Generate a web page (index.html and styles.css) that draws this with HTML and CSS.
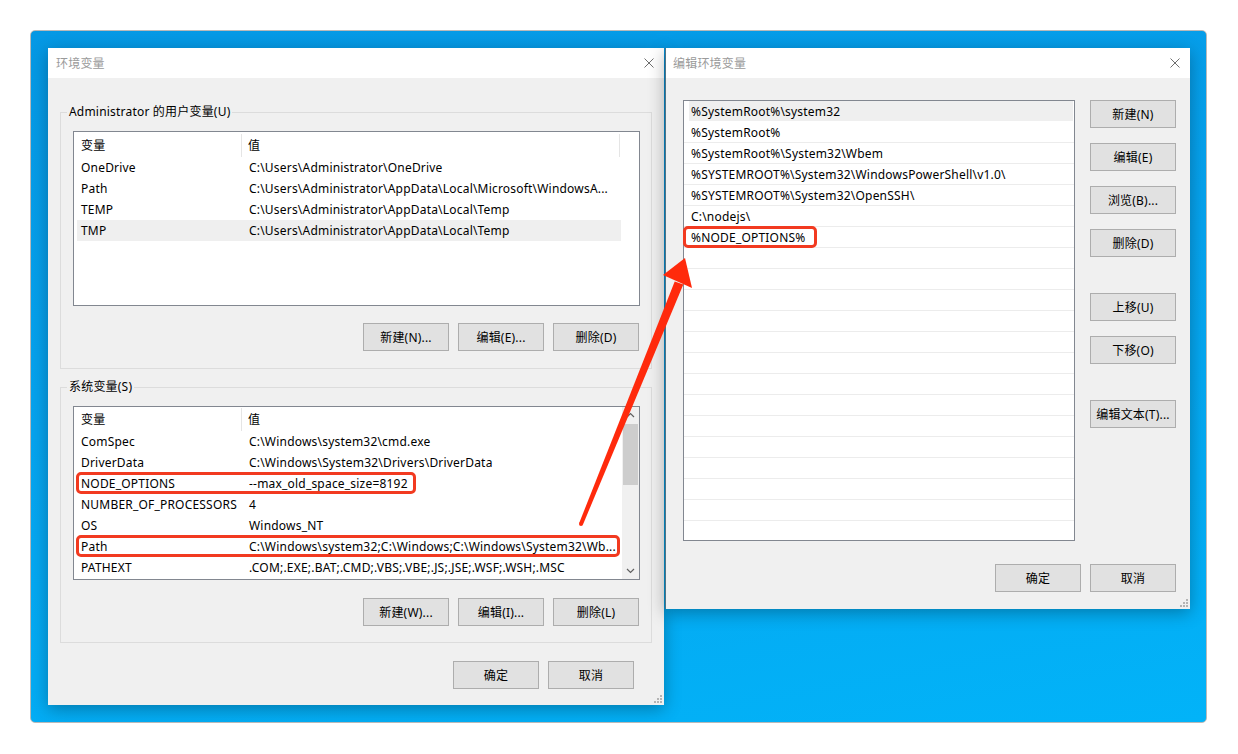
FILE: index.html
```html
<!DOCTYPE html>
<html lang="zh-CN">
<head>
    <meta charset="UTF-8">
    <title>环境变量</title>
    <link rel="stylesheet" href="styles.css">
</head>
<body>
    <div class="desktop">
        <!-- 环境变量 -->
        <div class="window env-window">
            <div class="titlebar">
                <span class="title">环境变量</span>
                <svg class="close" width="10" height="10" viewBox="0 0 10 10"><path d="M0.5 0.5L9.5 9.5M9.5 0.5L0.5 9.5" stroke="#6f6f6f" stroke-width="1"/></svg>
            </div>
            <div class="window-body env-body">
                <fieldset class="group">
                    <legend>Administrator 的用户变量(U)</legend>
                    <div class="listview user-list">
                        <div class="lv-main">
                            <div class="lv-head">
                                <div class="h1">变量</div>
                                <div class="h2">值</div>
                            </div>
                            <div class="lv-row"><div class="c1">OneDrive</div><div class="c2">C:\Users\Administrator\OneDrive</div></div>
                            <div class="lv-row"><div class="c1">Path</div><div class="c2">C:\Users\Administrator\AppData\Local\Microsoft\WindowsA...</div></div>
                            <div class="lv-row"><div class="c1">TEMP</div><div class="c2">C:\Users\Administrator\AppData\Local\Temp</div></div>
                            <div class="lv-row selected"><div class="c1">TMP</div><div class="c2">C:\Users\Administrator\AppData\Local\Temp</div></div>
                        </div>
                    </div>
                    <div class="btn-row">
                        <button>新建(N)...</button>
                        <button>编辑(E)...</button>
                        <button>删除(D)</button>
                    </div>
                </fieldset>

                <fieldset class="group sys-group">
                    <legend>系统变量(S)</legend>
                    <div class="listview sys-list">
                        <div class="lv-main">
                            <div class="lv-head">
                                <div class="h1">变量</div>
                                <div class="h2">值</div>
                            </div>
                            <div class="lv-row"><div class="c1">ComSpec</div><div class="c2">C:\Windows\system32\cmd.exe</div></div>
                            <div class="lv-row"><div class="c1">DriverData</div><div class="c2">C:\Windows\System32\Drivers\DriverData</div></div>
                            <div class="lv-row"><div class="c1">NODE_OPTIONS</div><div class="c2">--max_old_space_size=8192</div><span class="mark mark-node"></span></div>
                            <div class="lv-row"><div class="c1">NUMBER_OF_PROCESSORS</div><div class="c2">4</div></div>
                            <div class="lv-row"><div class="c1">OS</div><div class="c2">Windows_NT</div></div>
                            <div class="lv-row"><div class="c1">Path</div><div class="c2">C:\Windows\system32;C:\Windows;C:\Windows\System32\Wb...</div><span class="mark mark-path"></span></div>
                            <div class="lv-row"><div class="c1">PATHEXT</div><div class="c2">.COM;.EXE;.BAT;.CMD;.VBS;.VBE;.JS;.JSE;.WSF;.WSH;.MSC</div></div>
                        </div>
                        <div class="scrollbar">
                            <svg class="arrow-btn" width="17" height="17" viewBox="0 0 17 17"><path d="M5 10L8.5 6.5L12 10" fill="none" stroke="#606060" stroke-width="1.2"/></svg>
                            <div class="thumb"></div>
                            <div class="track"></div>
                            <svg class="arrow-btn" width="17" height="17" viewBox="0 0 17 17"><path d="M5 7L8.5 10.5L12 7" fill="none" stroke="#606060" stroke-width="1.2"/></svg>
                        </div>
                    </div>
                    <div class="btn-row">
                        <button>新建(W)...</button>
                        <button>编辑(I)...</button>
                        <button>删除(L)</button>
                    </div>
                </fieldset>

                <div class="btn-row dialog-btns">
                    <button>确定</button>
                    <button>取消</button>
                </div>
            </div>
            <svg class="grip" width="9" height="9" viewBox="0 0 9 9" fill="#b4b4b4"><rect x="7" y="1" width="2" height="2"/><rect x="4" y="4" width="2" height="2"/><rect x="7" y="4" width="2" height="2"/><rect x="1" y="7" width="2" height="2"/><rect x="4" y="7" width="2" height="2"/><rect x="7" y="7" width="2" height="2"/></svg>
        </div>

        <!-- 编辑环境变量 -->
        <div class="window edit-window">
            <div class="titlebar">
                <span class="title">编辑环境变量</span>
                <svg class="close" width="10" height="10" viewBox="0 0 10 10"><path d="M0.5 0.5L9.5 9.5M9.5 0.5L0.5 9.5" stroke="#6f6f6f" stroke-width="1"/></svg>
            </div>
            <div class="window-body edit-body">
                <div class="edit-main">
                    <div class="path-list">
                        <div class="path-row selected">%SystemRoot%\system32</div>
                        <div class="path-row">%SystemRoot%</div>
                        <div class="path-row">%SystemRoot%\System32\Wbem</div>
                        <div class="path-row">%SYSTEMROOT%\System32\WindowsPowerShell\v1.0\</div>
                        <div class="path-row">%SYSTEMROOT%\System32\OpenSSH\</div>
                        <div class="path-row">C:\nodejs\</div>
                        <div class="path-row">%NODE_OPTIONS%<span class="mark mark-env"></span></div>
                        <div class="path-row"></div>
                        <div class="path-row"></div>
                        <div class="path-row"></div>
                        <div class="path-row"></div>
                        <div class="path-row"></div>
                        <div class="path-row"></div>
                        <div class="path-row"></div>
                        <div class="path-row"></div>
                        <div class="path-row"></div>
                        <div class="path-row"></div>
                        <div class="path-row"></div>
                        <div class="path-row"></div>
                        <div class="path-row"></div>
                    </div>
                    <div class="side-btns">
                        <button>新建(N)</button>
                        <button class="gap-s">编辑(E)</button>
                        <button class="gap-s">浏览(B)...</button>
                        <button class="gap-s">删除(D)</button>
                        <button class="gap-l">上移(U)</button>
                        <button class="gap-s">下移(O)</button>
                        <button class="gap-l">编辑文本(T)...</button>
                    </div>
                </div>
                <div class="btn-row edit-btns">
                    <button>确定</button>
                    <button>取消</button>
                </div>
            </div>
            <svg class="grip" width="9" height="9" viewBox="0 0 9 9" fill="#b4b4b4"><rect x="7" y="1" width="2" height="2"/><rect x="4" y="4" width="2" height="2"/><rect x="7" y="4" width="2" height="2"/><rect x="1" y="7" width="2" height="2"/><rect x="4" y="7" width="2" height="2"/><rect x="7" y="7" width="2" height="2"/></svg>
        </div>
    </div>

    <!-- annotation arrow -->
    <svg class="annotation" width="1238" height="754" viewBox="0 0 1238 754">
        <polygon points="579.1,523.3 582.9,524.7 683.3,284.6 674.7,281.4" fill="#ff2a0c"/>
        <circle cx="581" cy="524" r="2" fill="#ff2a0c"/>
        <polygon points="685,258 663,275 692,288" fill="#ff2a0c"/>
    </svg>
</body>
</html>
```

FILE: styles.css
```css
:root {
    --ui-font: "Noto Sans", "Noto Sans CJK SC", sans-serif;
    --face: #f0f0f0;
    --btn-face: #e1e1e1;
    --btn-border: #adadad;
    --list-border: #828790;
    --mark: #f23a20;
}

body {
    margin: 0;
    background: #fff;
    font-family: var(--ui-font);
    font-size: 12px;
    letter-spacing: 0.2px;
    color: #000;
}

.desktop {
    position: relative;
    box-sizing: border-box;
    width: 1177px;
    height: 693px;
    margin: 30px 0 0 30px;
    border: 1px solid #b9b9b9;
    border-radius: 5px;
    background: linear-gradient(170deg, #0598e4 0%, #06a3ee 45%, #02b3f8 100%);
    overflow: hidden;
}

/* windows */
.window {
    position: absolute;
    top: 17px;
    box-sizing: border-box;
    display: flex;
    flex-direction: column;
    background: var(--face);
    box-shadow: 0 4px 16px rgba(0, 0, 0, 0.3);
}

.env-window {
    left: 17px;
    width: 616px;
    height: 657px;
    z-index: 1;
}

.edit-window {
    left: 634px;
    width: 525px;
    height: 561px;
    border-left: 1px solid #4f7286;
    z-index: 2;
}

.titlebar {
    height: 30px;
    flex: none;
    display: flex;
    align-items: center;
    justify-content: space-between;
    padding: 0 10px 0 8px;
    background: #fff;
}

.edit-window .titlebar {
    padding-left: 7px;
    padding-right: 10px;
}

.title {
    color: #9a9a9a;
    font-size: 12px;
}

.close {
    display: block;
}

.window-body {
    flex: 1;
    display: flex;
    flex-direction: column;
}

.grip {
    position: absolute;
    right: 2px;
    bottom: 2px;
}

/* buttons */
button {
    box-sizing: border-box;
    width: 86px;
    height: 28px;
    padding: 0;
    background: var(--btn-face);
    border: 1px solid var(--btn-border);
    border-radius: 0;
    font-family: var(--ui-font);
    font-size: 12px;
    letter-spacing: 0.2px;
    color: #000;
}

.btn-row {
    display: flex;
    justify-content: flex-end;
    gap: 9px;
}

/* 环境变量 dialog */
.env-body {
    padding: 26px 12px 0 12px;
}

.group {
    margin: 0;
    padding: 11px 11px 17px 12px;
    border: 1px solid #dcdcdc;
    min-width: 0;
}

.group legend {
    padding: 0 2px;
    margin-left: -6px;
    line-height: 16px;
}

.sys-group {
    margin-top: 10px;
    padding-bottom: 16px;
}

.group .btn-row {
    margin-top: 17px;
    padding-right: 1px;
}

.sys-group .btn-row {
    margin-top: 18px;
}

.dialog-btns {
    margin-top: 18px;
    padding-right: 18px;
}

.listview {
    box-sizing: border-box;
    display: flex;
    background: #fff;
    border: 1px solid var(--list-border);
}

.user-list {
    height: 175px;
}

.sys-list {
    height: 174px;
}

.lv-main {
    flex: 1;
    min-width: 0;
}

.lv-head {
    display: flex;
    height: 24px;
    align-items: center;
}

.user-list .lv-head {
    height: 25px;
}

.lv-head .h1 {
    box-sizing: border-box;
    width: 168px;
    padding-left: 7px;
    border-right: 1px solid #e5e5e5;
    line-height: 23px;
    margin-top: 1px;
}

.lv-head .h2 {
    box-sizing: border-box;
    width: 378px;
    padding-left: 6px;
    border-right: 1px solid #e5e5e5;
    line-height: 23px;
    margin-top: 1px;
}

.sys-list .lv-head .h2 {
    border-right: none;
}

.lv-row {
    position: relative;
    display: flex;
    width: 544px;
    height: 21px;
    line-height: 21px;
    margin-left: 3px;
    white-space: nowrap;
}

.lv-row.selected {
    background: #efefef;
}

.lv-row .c1 {
    width: 165px;
    padding-left: 4px;
    box-sizing: border-box;
    overflow: hidden;
}

.lv-row .c2 {
    flex: 1;
    padding-left: 7px;
    overflow: hidden;
}

.scrollbar {
    width: 17px;
    flex: none;
    display: flex;
    flex-direction: column;
    background: #f0f0f0;
}

.arrow-btn {
    display: block;
    flex: none;
}

.thumb {
    height: 61px;
    margin: 0 1px;
    background: #cdcdcd;
}

.track {
    flex: 1;
}

/* red annotation boxes */
.mark {
    position: absolute;
    box-sizing: border-box;
    border: 3px solid var(--mark);
    border-radius: 5px;
    pointer-events: none;
}

.mark-node {
    left: -1px;
    top: -1px;
    width: 340px;
    height: 22px;
}

.mark-path {
    left: -1px;
    top: -1px;
    width: 544px;
    height: 22px;
}

.mark-env {
    left: -1px;
    top: -1px;
    width: 134px;
    height: 22px;
}

/* 编辑环境变量 dialog */
.edit-body {
    padding: 22px 14px 0 17px;
}

.edit-main {
    display: flex;
    gap: 15px;
}

.path-list {
    box-sizing: border-box;
    width: 392px;
    height: 441px;
    background: #fff;
    border: 1px solid var(--list-border);
}

.path-row {
    position: relative;
    box-sizing: border-box;
    height: 21px;
    line-height: 21px;
    padding-left: 7px;
    border-bottom: 1px solid #ececec;
    white-space: nowrap;
}

.path-row.selected {
    background: linear-gradient(to right, transparent 5px, #efefef 5px, #efefef 389px, transparent 389px);
    border-bottom-color: #fff;
}

.side-btns {
    display: flex;
    flex-direction: column;
}

.side-btns .gap-s {
    margin-top: 15px;
}

.side-btns .gap-l {
    margin-top: 36px;
}

.edit-btns {
    margin-top: 23px;
}

.annotation {
    position: absolute;
    left: 0;
    top: 0;
    z-index: 10;
    pointer-events: none;
}
```
